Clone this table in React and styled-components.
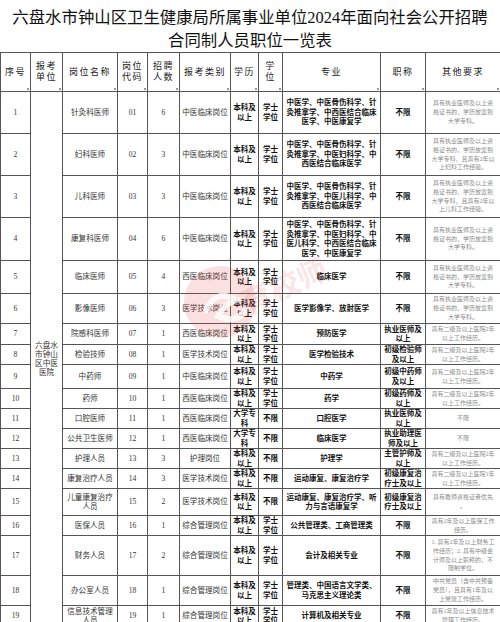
import React from 'react';
import styled, { createGlobalStyle } from 'styled-components';

const Global = createGlobalStyle`
  html, body { margin: 0; padding: 0; background: #fff; }
  body { font-family: "Liberation Serif", "Noto Sans CJK SC", serif; color: #222; }
`;

const Page = styled.div`
  position: relative;
  width: 500px;
  overflow: hidden;
`;

const Title = styled.h1`
  margin: 0;
  padding: 6px 0 0;
  height: 52px;
  box-sizing: border-box;
  font-size: 16.4px;
  line-height: 23px;
  font-weight: 400;
  text-align: center;
  color: #111;
  white-space: pre-line;
`;

const Table = styled.table`
  width: 500px;
  table-layout: fixed;
  border-collapse: collapse;
`;

const HeadRow = styled.tr`
  height: 39px;
`;

const HeadCell = styled.th`
  position: relative;
  border: 1px solid #555;
  padding: 0;
  font-size: 9px;
  line-height: 11px;
  letter-spacing: 1.5px;
  font-weight: 400;
  color: #222;
  text-align: center;
  vertical-align: middle;
  white-space: pre-line;
  &::after {
    content: '';
    position: absolute;
    right: 1px;
    bottom: 1px;
    width: 2px;
    height: 2px;
    background: #9a9a9a;
  }
`;

const Row = styled.tr`
  height: ${p => p.$h}px;
`;

const tones = {
  plain: 'font-size: 7.6px; line-height: 9.5px; color: #333; font-weight: 400;',
  strong: 'font-size: 7.5px; line-height: 9.5px; color: #111; font-weight: 700;',
  note: 'font-size: 6px; line-height: 8.7px; color: #8a8a8a; font-weight: 400; padding: 0 4px;',
  unit: 'font-size: 7.6px; line-height: 9px; color: #333; font-weight: 400;',
};

const Cell = styled.td`
  border: 1px solid #555;
  padding: 0 1px;
  text-align: center;
  vertical-align: middle;
  white-space: pre-line;
  overflow: hidden;
  ${p => tones[p.$tone || 'plain']}
`;

const Watermark = styled.svg`
  position: absolute;
  left: 178px;
  top: 222px;
  pointer-events: none;
`;

const cols = [30, 32, 55, 30, 32, 51, 28, 24, 98, 45, 75];

const heads = ['序号', '报考\n单位', '岗位名称', '岗位\n代码', '招聘\n人数', '报考类别', '学历', '学\n位', '专业', '职称', '其他要求'];

const BK = '本科及\n以上';
const DZ = '大学专\n科';
const XS = '学士\n学位';
const BX = '不限';
const N1 = '具有执业医师及以上资\n格证书的，学历放宽到\n大学专科。';
const N2 = '具有二级及以上医院2年\n以上工作经历。';

const rows = [
  { h: 42, name: '针灸科医师', cat: '中医临床岗位', n: 6, edu: BK, deg: XS, major: '中医学、中医骨伤科学、针\n灸推拿学、中西医结合临床\n医学、中医康复学', title: BX, note: N1 },
  { h: 42, name: '妇科医师', cat: '中医临床岗位', n: 3, edu: BK, deg: XS, major: '中医学、中医骨伤科学、针\n灸推拿学、中医妇科学、中\n西医结合临床医学', title: BX, note: '具有执业医师及以上资\n格证书的，学历放宽到\n大学专科，且具有2年以\n上妇科工作经验。' },
  { h: 42, name: '儿科医师', cat: '中医临床岗位', n: 3, edu: BK, deg: XS, major: '中医学、中医骨伤科学、针\n灸推拿学、中医儿科学、中\n西医结合临床医学', title: BX, note: '具有执业医师及以上资\n格证书的，学历放宽到\n大学专科，且具有2年以\n上儿科工作经验。' },
  { h: 43, name: '康复科医师', cat: '中医临床岗位', n: 6, edu: BK, deg: XS, major: '中医学、中医骨伤科学、针\n灸推拿学、中医妇科学、中\n医儿科学、中西医结合临床\n医学、中医康复学', title: BX, note: N1 },
  { h: 33, name: '临床医师', cat: '西医临床岗位', n: 4, edu: BK, deg: XS, major: '临床医学', title: BX, note: N1 },
  { h: 30, name: '影像医师', cat: '医学技术岗位', n: 3, edu: BK, deg: XS, major: '医学影像学、放射医学', title: BX, note: N1 },
  { h: 21, name: '院感科医师', cat: '西医临床岗位', n: 1, edu: BK, deg: XS, major: '预防医学', title: '执业医师及\n以上', note: N2 },
  { h: 19, name: '检验技师', cat: '医学技术岗位', n: 1, edu: BK, deg: XS, major: '医学检验技术', title: '初级检验师\n及以上', note: N2 },
  { h: 24, name: '中药师', cat: '中医临床岗位', n: 1, edu: BK, deg: XS, major: '中药学', title: '初级中药师\n及以上', note: N2 },
  { h: 20, name: '药师', cat: '西医临床岗位', n: 1, edu: BK, deg: XS, major: '药学', title: '初级药师及\n以上', note: N2 },
  { h: 20, name: '口腔医师', cat: '西医临床岗位', n: 1, edu: DZ, deg: BX, major: '口腔医学', title: '执业医师及\n以上', note: BX },
  { h: 19, name: '公共卫生医师', cat: '西医临床岗位', n: 1, edu: DZ, deg: BX, major: '临床医学', title: '执业助理医\n师及以上', note: BX },
  { h: 20, name: '护理人员', cat: '护理岗位', n: 3, edu: BK, deg: BX, major: '护理学', title: '主管护师及\n以上', note: N2 },
  { h: 19, name: '康复治疗人员', cat: '医学技术岗位', n: 3, edu: BK, deg: BX, major: '运动康复、康复治疗学', title: '初级康复治\n疗士及以上', note: '具有二级及以上医院1年\n以上工作经历。' },
  { h: 27, name: '儿童康复治疗\n人员', cat: '医学技术岗位', n: 2, edu: BK, deg: BX, major: '运动康复、康复治疗学、听\n力与言语康复学', title: '初级康复治\n疗士及以上', note: '具有教师资格证者优先\n。' },
  { h: 20, name: '医保人员', cat: '综合管理岗位', n: 1, edu: BK, deg: XS, major: '公共管理类、工商管理类', title: BX, note: '具有2年及以上医保工作\n经历。' },
  { h: 40, name: '财务人员', cat: '综合管理岗位', n: 2, edu: BK, deg: XS, major: '会计及相关专业', title: BX, note: '1. 具有2年及以上财务工\n作经历；2. 具有中级会\n计师及以上职称的，不\n限制学位。' },
  { h: 30, name: '办公室人员', cat: '综合管理岗位', n: 1, edu: BK, deg: XS, major: '管理类、中国语言文学类、\n马克思主义理论类', title: BX, note: '中共党员（含中共预备\n党员），且具有1年及以\n上党建工作经历。' },
  { h: 21, name: '信息技术管理\n人员', cat: '综合管理岗位', n: 1, edu: BK, deg: XS, major: '计算机及相关专业', title: BX, note: '具有1年及以上信息技术\n管理工作经历。' },
];

const pad = i => String(i).padStart(2, '0');

export default function App() {
  return (
    <Page>
      <Global />
      <Title>{'六盘水市钟山区卫生健康局所属事业单位2024年面向社会公开招聘\n合同制人员职位一览表'}</Title>
      <Table>
        <colgroup>
          {cols.map((w, i) => <col key={i} style={{ width: w }} />)}
        </colgroup>
        <thead>
          <HeadRow>
            {heads.map(h => <HeadCell key={h}>{h}</HeadCell>)}
          </HeadRow>
        </thead>
        <tbody>
          {rows.map((r, i) => (
            <Row key={i} $h={r.h}>
              <Cell>{i + 1}</Cell>
              {i === 0 && <Cell $tone="unit" rowSpan={rows.length}>{'六盘水\n市钟山\n区中医\n医院'}</Cell>}
              <Cell>{r.name}</Cell>
              <Cell>{pad(i + 1)}</Cell>
              <Cell>{r.n}</Cell>
              <Cell>{r.cat}</Cell>
              <Cell $tone="strong">{r.edu}</Cell>
              <Cell $tone="strong">{r.deg}</Cell>
              <Cell $tone="strong">{r.major}</Cell>
              <Cell $tone="strong">{r.title}</Cell>
              <Cell $tone="note">{r.note}</Cell>
            </Row>
          ))}
        </tbody>
      </Table>
      <Watermark width="200" height="130" viewBox="0 0 200 130">
        <g fill="rgba(222,60,60,0.16)">
          <circle cx="42" cy="80" r="36" />
        </g>
        <path d="M28 88 q10 -22 30 -10 q-12 4 -18 16 q16 8 26 -4" fill="none" stroke="rgba(255,255,255,0.8)" strokeWidth="6" strokeLinecap="round" />
        <text x="70" y="92" transform="rotate(-24 70 92)" fontSize="30" fontWeight="700" fill="rgba(222,60,60,0.15)" fontFamily="Noto Sans CJK SC, sans-serif">育校师</text>
      </Watermark>
    </Page>
  );
}
